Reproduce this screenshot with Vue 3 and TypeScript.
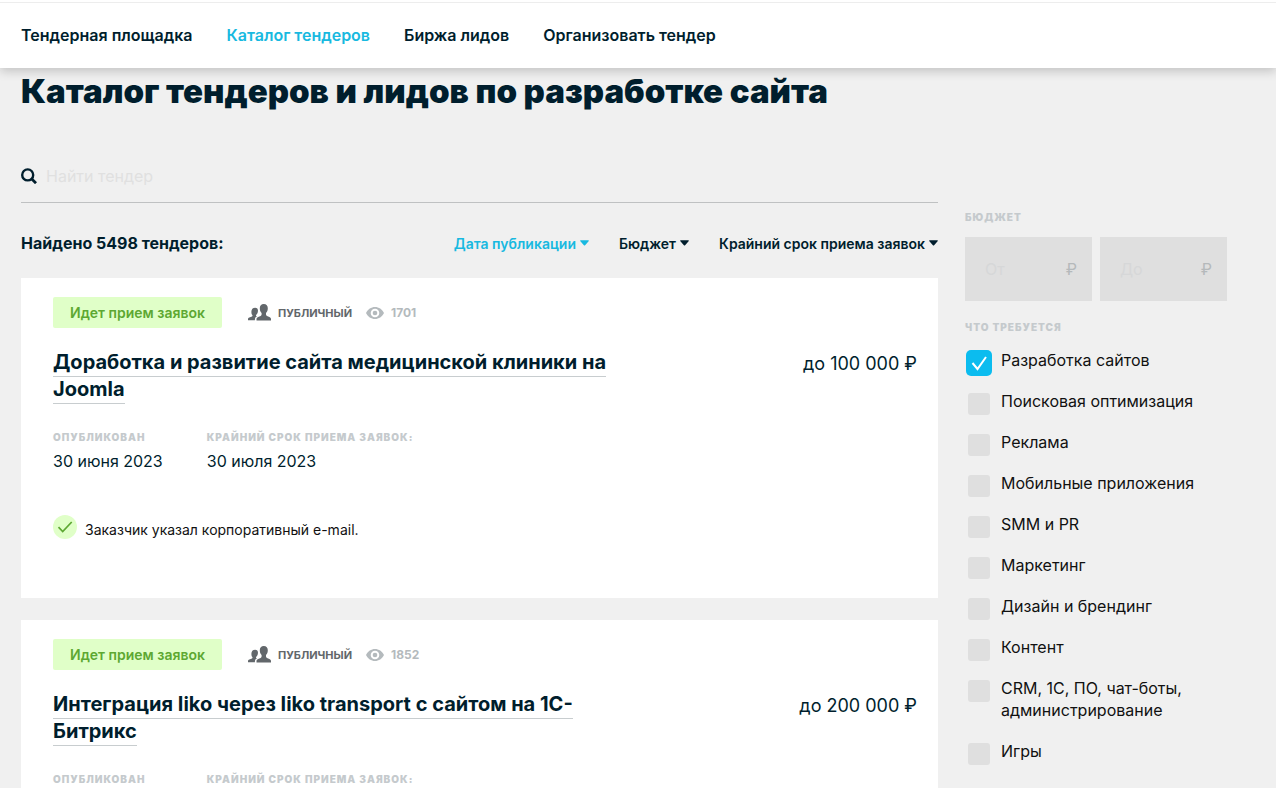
<script setup lang="ts">
import { ref } from 'vue'

interface Tender {
  id: number
  title: string
  views: number
  budget: string
  published: string
  deadline: string
}

interface Service {
  id: string
  label: string
  checked: boolean
}

const navigation = [
  { label: 'Тендерная площадка', active: false },
  { label: 'Каталог тендеров', active: true },
  { label: 'Биржа лидов', active: false },
  { label: 'Организовать тендер', active: false },
]

const sortings = ['Дата публикации', 'Бюджет', 'Крайний срок приема заявок']
const activeSorting = ref(sortings[0])
const query = ref('')
const budgetFrom = ref('')
const budgetTo = ref('')

const tenders: Tender[] = [
  {
    id: 1,
    title: 'Доработка и развитие сайта медицинской клиники на Joomla',
    views: 1701,
    budget: 'до 100 000 ₽',
    published: '30 июня 2023',
    deadline: '30 июля 2023',
  },
  {
    id: 2,
    title: 'Интеграция Iiko через Iiko transport с сайтом на 1С-Битрикс',
    views: 1852,
    budget: 'до 200 000 ₽',
    published: '30 июня 2023',
    deadline: '30 июля 2023',
  },
]

const services = ref<Service[]>([
  { id: 'web', label: 'Разработка сайтов', checked: true },
  { id: 'seo', label: 'Поисковая оптимизация', checked: false },
  { id: 'ads', label: 'Реклама', checked: false },
  { id: 'mobile', label: 'Мобильные приложения', checked: false },
  { id: 'smm', label: 'SMM и PR', checked: false },
  { id: 'marketing', label: 'Маркетинг', checked: false },
  { id: 'design', label: 'Дизайн и брендинг', checked: false },
  { id: 'content', label: 'Контент', checked: false },
  { id: 'crm', label: 'CRM, 1С, ПО, чат-боты, администрирование', checked: false },
  { id: 'games', label: 'Игры', checked: false },
])
</script>

<template>
  <div class="page">
    <header class="header">
      <nav class="nav">
        <a
          v-for="item in navigation"
          :key="item.label"
          href="#"
          class="nav-link"
          :class="{ active: item.active }"
        >{{ item.label }}</a>
      </nav>
    </header>

    <h1 class="heading">Каталог тендеров и лидов по разработке сайта</h1>

    <div class="layout">
      <main class="content">
        <form class="search" role="search" @submit.prevent>
          <label for="search" class="search-icon" aria-label="Поиск">
            <svg viewBox="0 0 16 16" width="16" height="16" fill="none" stroke="currentColor">
              <circle cx="6.7" cy="6.9" r="5.5" stroke-width="2.4" />
              <path d="M10.8 11 15 15.2" stroke-width="2.8" />
            </svg>
          </label>
          <input id="search" v-model="query" type="text" placeholder="Найти тендер" />
        </form>

        <div class="toolbar">
          <p class="found">Найдено 5498 тендеров:</p>
          <div class="sortings">
            <button
              v-for="sorting in sortings"
              :key="sorting"
              type="button"
              class="sorting"
              :class="{ active: sorting === activeSorting }"
              @click="activeSorting = sorting"
            >{{ sorting }}<svg viewBox="0 0 9 6" width="9" height="6"><path d="M.9.3h7.2c.7 0 .9.600.5 1L5.100 5.200c-.4.400-.8.400-1.200 0L.4 1.300C0 .9.200.3.9.3z" fill="currentColor" /></svg></button>
          </div>
        </div>

        <article v-for="tender in tenders" :key="tender.id" class="card">
          <div class="meta">
            <span class="badge">Идет прием заявок</span>
            <span class="access">
              <svg viewBox="0 0 23 17" width="23" height="17" fill="currentColor">
                <path d="M15.8 0c2.6 0 4 1.8 4 4.3 0 1.9-.6 3.6-1.8 4.7v1.6c0 .6.3 1 1 1.3l2.4 1c1.2.5 1.6 1.2 1.6 2.4v1.2H8.500v-1.200c0-1.200.4-1.900 1.600-2.400l2.500-1c.7-.3 1-.7 1-1.300V9c-1.200-1.100-1.800-2.800-1.800-4.700C11.800 1.800 13.200 0 15.800 0z" />
                <path d="M7.200 3.700c1.500 0 2.500.8 2.700 2.400.2 1.800-.4 3.600-1.600 4.700-.5.500-.4.900.1 1.200l.7.300c-1.500.7-2.200 1.700-2.200 3.300v.7H0v-1c0-.9.400-1.400 1.300-1.700l2.100-.8c.8-.3 1.100-.6 1.100-1.200 0-.4-.2-.6-.4-.8-.5-.6-.7-1.500-.7-3 0-2.500 1.300-4.100 3.800-4.100z" />
              </svg>
              публичный
            </span>
            <span class="views">
              <svg viewBox="0 0 18 12" width="18" height="12">
                <path d="M9 0C5.200 0 1.800 2.300 0 6c1.800 3.700 5.200 6 9 6s7.200-2.300 9-6C16.200 2.300 12.800 0 9 0zm0 1.700a4.300 4.300 0 1 1 0 8.600 4.300 4.300 0 0 1 0-8.600z" fill="currentColor" fill-rule="evenodd" />
                <circle cx="9" cy="6" r="2.300" fill="currentColor" />
              </svg>
              {{ tender.views }}
            </span>
          </div>

          <div class="summary">
            <h2 class="title"><a href="#">{{ tender.title }}</a></h2>
            <p class="price">{{ tender.budget }}</p>
          </div>

          <dl class="dates">
            <div>
              <dt class="caption">Опубликован</dt>
              <dd>{{ tender.published }}</dd>
            </div>
            <div>
              <dt class="caption">Крайний срок приема заявок:</dt>
              <dd>{{ tender.deadline }}</dd>
            </div>
          </dl>

          <p class="verified">
            <svg viewBox="0 0 24 24" width="24" height="24" fill="none">
              <circle cx="12" cy="12" r="12" fill="#e0ffc8" />
              <path d="m5.500 12.200 4.200 4.300 9-9.500" stroke="#5da832" stroke-width="1.700" />
            </svg>
            <span>Заказчик указал корпоративный e-mail.</span>
          </p>
        </article>
      </main>

      <aside class="filters">
        <fieldset class="group">
          <legend class="caption">Бюджет</legend>
          <div class="budget">
            <label class="amount">
              <input v-model="budgetFrom" type="text" placeholder="От" aria-label="Бюджет от" />
              <span>₽</span>
            </label>
            <label class="amount">
              <input v-model="budgetTo" type="text" placeholder="До" aria-label="Бюджет до" />
              <span>₽</span>
            </label>
          </div>
        </fieldset>

        <fieldset class="group">
          <legend class="caption">Что требуется</legend>
          <ul class="services">
            <li v-for="service in services" :key="service.id">
              <label class="service" :for="service.id">
                <span class="tick">
                  <input :id="service.id" v-model="service.checked" type="checkbox" />
                  <svg v-if="service.checked" viewBox="0 0 26 26" width="26" height="26" fill="none">
                    <path d="m6.500 13 5 6L20 7" stroke="#fff" stroke-width="2" />
                  </svg>
                </span>
                <span>{{ service.label }}</span>
              </label>
            </li>
          </ul>
        </fieldset>
      </aside>
    </div>
  </div>
</template>

<style>
body {
  margin: 0;
  background: #f0f0f0;
}
</style>

<style scoped>
.page {
  min-height: 100vh;
  color: #001e2d;
  background: #f0f0f0;
  font-family: Inter, "Liberation Sans", sans-serif;
  font-size: 16px;
}

.page * {
  box-sizing: border-box;
}

h1, h2, p, dl, dd, ul, fieldset {
  margin: 0;
  padding: 0;
}

svg {
  display: block;
  flex: none;
}

input, button {
  font: inherit;
  color: inherit;
}

.header {
  background: #fff;
  border-top: 2px solid #fff;
  box-shadow: 0 3px 10px rgba(0, 0, 0, 0.2);
}

.nav {
  display: flex;
  gap: 34px;
  padding: 22px 21px;
  border-top: 1px solid #ededed;
}

.nav-link {
  font-weight: 600;
  line-height: 21px;
  color: inherit;
  text-decoration: none;
}

.nav-link.active,
.sorting.active {
  color: #18b9e0;
}

.heading {
  padding: 3px 21px 0;
  font-size: 33px;
  font-weight: 900;
  line-height: 40px;
}

.layout {
  display: grid;
  grid-template-columns: minmax(0, 1fr) 262px;
  gap: 27px;
  padding: 39px 49px 0 21px;
}

.search {
  display: flex;
  align-items: center;
  gap: 9px;
  height: 53px;
  border-bottom: 1px solid #bfc1c2;
}

.search input {
  flex: 1;
  min-width: 0;
  padding: 0;
  border: 0;
  outline: 0;
  background: transparent;
}

.search input::placeholder {
  color: #e0e0e0;
  opacity: 1;
}

.toolbar {
  display: flex;
  justify-content: space-between;
  align-items: center;
  height: 75px;
  padding-top: 5px;
  white-space: nowrap;
}

.found {
  font-weight: 700;
}

.sortings {
  display: flex;
  gap: 30px;
}

.sorting {
  display: flex;
  align-items: center;
  gap: 4px;
  padding: 0;
  border: 0;
  background: none;
  font-size: 14px;
  font-weight: 600;
}

.card {
  min-height: 320px;
  margin-bottom: 22px;
  padding: 19px 21px 0 32px;
  background: #fff;
}

.meta {
  display: flex;
  align-items: center;
  font-weight: 700;
}

.badge {
  padding: 0 17px;
  border-radius: 2px;
  background: #e0ffc8;
  color: #5da832;
  font-size: 14px;
  font-weight: 600;
  line-height: 31px;
}

.access,
.views {
  display: flex;
  align-items: center;
  gap: 7px;
}

.access {
  margin-left: 26px;
  color: #62676b;
  font-size: 11px;
  text-transform: uppercase;
}

.views {
  margin-left: 14px;
  color: #b4babd;
  font-size: 12px;
}

.summary {
  display: flex;
  justify-content: space-between;
  align-items: flex-start;
  gap: 20px;
  margin-top: 21px;
}

.title {
  max-width: 560px;
  font-size: 20px;
  font-weight: 700;
  line-height: 27px;
}

.title a {
  padding-bottom: 2px;
  border-bottom: 1px solid #c8cdcf;
  color: inherit;
  text-decoration: none;
}

.price {
  font-size: 18px;
  line-height: 30px;
  white-space: nowrap;
}

.caption {
  padding: 0;
  color: #c5cacd;
  font-size: 10px;
  font-weight: 900;
  line-height: 14px;
  letter-spacing: 1px;
  text-transform: uppercase;
}

.dates {
  display: flex;
  gap: 44px;
  margin-top: 27px;
}

.dates dd {
  margin-top: 7px;
  line-height: 20px;
}

.verified {
  display: flex;
  gap: 8px;
  margin-top: 44px;
  color: #111;
  font-size: 14px;
  line-height: 30px;
}

.filters {
  padding-top: 60px;
}

.group {
  min-width: 0;
  border: 0;
}

.budget {
  display: grid;
  grid-template-columns: 1fr 1fr;
  gap: 8px;
  margin: 13px 0 19px;
}

.amount {
  display: flex;
  align-items: center;
  height: 64px;
  padding: 0 15px 0 20px;
  background: #dfdfdf;
  color: #b5b9bb;
}

.amount input {
  flex: 1;
  width: 0;
  min-width: 0;
  padding: 0;
  border: 0;
  outline: 0;
  background: transparent;
}

.amount input::placeholder {
  color: #d6d7d8;
  opacity: 1;
}

.services {
  display: grid;
  gap: 19px;
  margin-top: 15px;
  padding-left: 1px;
  list-style: none;
}

.service {
  display: flex;
  align-items: flex-start;
  gap: 9px;
  color: #111;
  line-height: 22px;
}

.tick {
  display: grid;
  flex: none;
  place-items: center;
  width: 26px;
  height: 26px;
  margin: 1px 0 -5px;
}

.tick > * {
  grid-area: 1 / 1;
}

.tick input {
  width: 22px;
  height: 22px;
  margin: 0;
  border-radius: 3px;
  background: #dfdfdf;
  appearance: none;
}

.tick input:checked {
  width: 26px;
  height: 26px;
  border-radius: 5px;
  background: #0bbcef;
}

.tick svg {
  pointer-events: none;
}
</style>
